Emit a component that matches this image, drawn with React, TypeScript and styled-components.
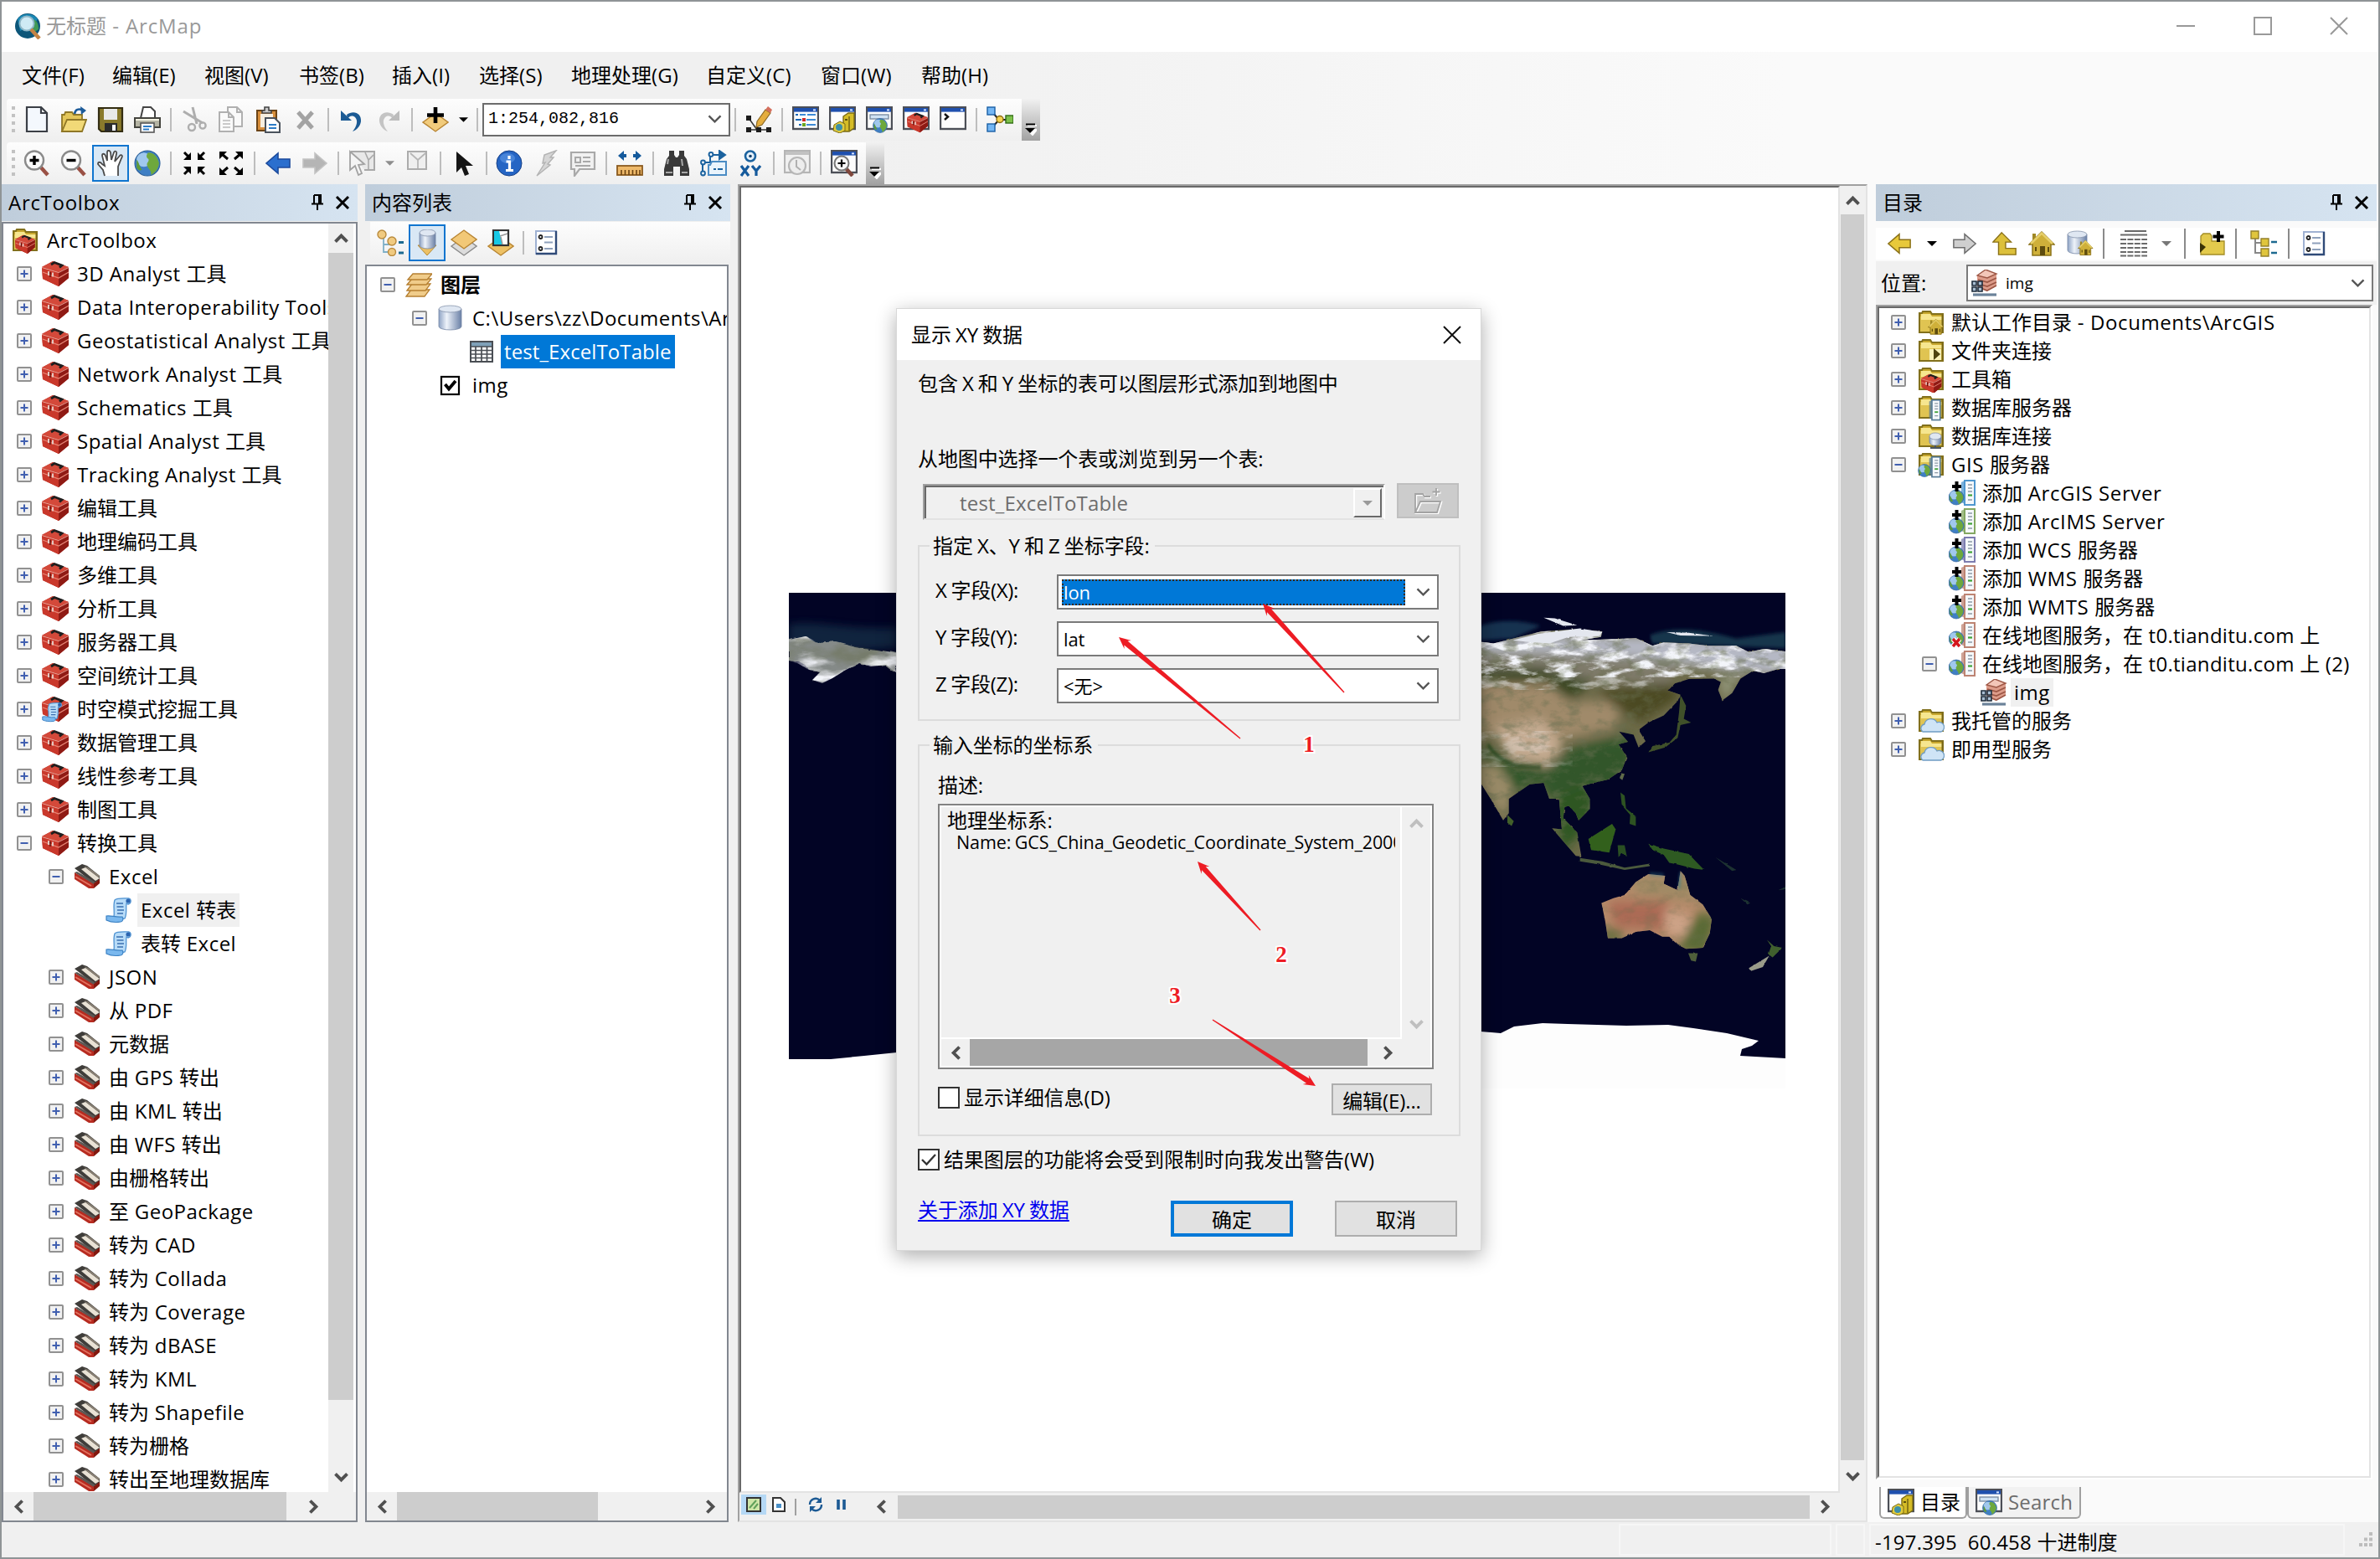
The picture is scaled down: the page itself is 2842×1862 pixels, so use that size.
import React from 'react';
import styled, { createGlobalStyle, css } from 'styled-components';

const UI = '"Open Sans", "Noto Sans CJK SC", sans-serif';

const Global = createGlobalStyle`
  html, body { margin: 0; padding: 0; }
  body { width: 2842px; height: 1862px; overflow: hidden; background: #f0f0f0; }
  *, *::before, *::after { box-sizing: border-box; }
  svg { display: block; flex: none; }
`;

/* ---------- icons ---------- */

const RedBox = () => (
  <g>
    <path d="M0 8 L13 1 L32 8 L32 21 L20 31 L1 22 Z" fill="#b0261c" />
    <path d="M0 8 L13 1 L32 8 L20 14 Z" fill="#d4493a" />
    <path d="M0 8 L20 14 L20 31 L1 22 Z" fill="#c9382b" />
    <path d="M20 14 L32 8 L32 21 L20 31 Z" fill="#8f1a14" />
    <path d="M1 14 L20 21 L32 14" stroke="#e78878" strokeWidth="1.2" fill="none" />
    <path d="M0 8.500 L20 14.500 L32 8.500" stroke="#eaa296" strokeWidth="1" fill="none" />
    <path d="M11 5 L15 2.500 L24 6 L21 8.500" stroke="#1e1e1e" strokeWidth="2.8" fill="none" />
    <path d="M8 13v5 M13 14.500v5" stroke="#e8d5cf" strokeWidth="1.8" />
    <path d="M10 14v6" stroke="#5b120c" strokeWidth="1.4" />
  </g>
);

const Folder = () => (
  <g>
    <path d="M2 5 h3 l1 -2 h9 l2 3 h13 v22 h-28 z" fill="#c9a92f" stroke="#82701c" strokeWidth="2" />
    <path d="M3 9 h26 v18 h-26 z" fill="#e0c452" />
    <path d="M4 6 h11 l2 3 h12 v4 h-25 z" fill="#f6e68f" />
    <path d="M29.500 7 V27" stroke="#7a6818" strokeWidth="2" />
  </g>
);

const Globe = ({ cx = 16, cy = 16, r = 14 }: { cx?: number; cy?: number; r?: number }) => (
  <g transform={`translate(${cx} ${cy}) scale(${r / 14})`}>
    <circle r="14" fill="#3f7fc4" stroke="#285d96" strokeWidth="1" />
    <circle cx="-4" cy="-4" r="8" fill="#b9dbf8" opacity=".8" />
    <path d="M1 -12 C8 -12 12 -6 13 0 C12 7 8 11 4 13 C5 8 1 7 0 3 C-2 -1 3 -2 1 -5 C-2 -7 -1 -10 1 -12Z" fill="#6ea83c" />
    <path d="M-12 -4 C-9 -1 -9 4 -6 7 C-8 9 -10 8 -12 5Z" fill="#5f9b38" />
  </g>
);

const Win = () => (
  <g>
    <rect x="1" y="1" width="30" height="26" fill="#fdfdfd" stroke="#4c4f57" strokeWidth="2.4" />
    <rect x="2" y="2" width="28" height="4.6" fill="#1f50ae" />
    <path d="M25 4.4h3" stroke="#d5e4ff" strokeWidth="2" />
  </g>
);

const CatBox = () => (
  <g>
    <path d="M17 12 l6 -4 h7 v18 l-6 4 h-7 z" fill="#d5bc27" stroke="#7a6a12" strokeWidth="1.4" />
    <path d="M24 12v17" stroke="#8b7a17" strokeWidth="2" />
    <path d="M19 16h3" stroke="#5d510c" strokeWidth="2" />
    <path d="M6 22 l7 -4 6 3 v8 l-6 3 -8 -3z" fill="#e2cc3d" stroke="#7a6a12" />
    <circle cx="12" cy="25" r="4" fill="#3c8fa8" />
  </g>
);

const Cylinder = ({ x = 4, y = 2, w = 24, h = 28 }: { x?: number; y?: number; w?: number; h?: number }) => (
  <g>
    <path d={`M${x} ${y + 4} v${h - 8} a${w / 2} 4 0 0 0 ${w} 0 v-${h - 8}z`} fill="url(#cyl)" stroke="#7587a4" strokeWidth=".8" />
    <ellipse cx={x + w / 2} cy={y + 4} rx={w / 2} ry="4" fill="#dfe7f2" stroke="#8593ab" strokeWidth=".8" />
  </g>
);

const ServerBox = ({ c, x = 19 }: { c: string; x?: number }) => (
  <g>
    <path d={`M${x - 4} 3 l4 -2 v28 l-4 -2z`} fill={c} opacity=".75" />
    <rect x={x} y="1" width="12" height="29" fill="#f5f8fb" stroke={c} strokeWidth="2" />
    <path d={`M${x + 4} 6h5 M${x + 4} 10h5 M${x + 4} 14h5 M${x + 4} 24h5`} stroke="#8c99a6" strokeWidth="1.5" />
    <path d={`M${x + 4} 18.5h5`} stroke="#3ea236" strokeWidth="2.2" />
  </g>
);

const Rhomb = ({ y = 16, fill = '#ecc069', s = '#b88532' }: { y?: number; fill?: string; s?: string }) => (
  <path d={`M1 ${y} L16 ${y - 11} L31 ${y} L16 ${y + 11}Z`} fill={fill} stroke={s} strokeWidth="1.4" />
);

const AddServer = ({ c }: { c: string }) => (
  <g>
    <ServerBox c={c} />
    <Globe cx={9} cy={21} r={9} />
    <path d="M9.500 2v12 M4 8h11" stroke="#000" strokeWidth="4" />
  </g>
);

const House = () => (
  <g>
    <path d="M1 17 L16 2 L31 17 L27 17 V30 H5 V17Z" fill="#cfb03a" stroke="#8a7118" strokeWidth="1.5" />
    <path d="M5 4 h4 v6 l-4 4z" fill="#a08825" />
    <path d="M3 16 L16 3.5 L29 16" stroke="#e6cf6a" strokeWidth="2.5" fill="none" />
    <rect x="14" y="19" width="6" height="11" fill="#5e4c0e" />
    <path d="M24 20v6 M9 20v5" stroke="#5e4c0e" strokeWidth="2" />
  </g>
);

const Props = () => (
  <g>
    <rect x="4" y="2" width="24" height="27" fill="#fff" stroke="#9fb1d2" strokeWidth="2" />
    <path d="M28 2 V29 H4" stroke="#2f4a78" strokeWidth="2.4" fill="none" />
    <circle cx="9.5" cy="9" r="2" fill="none" stroke="#222" strokeWidth="1.8" />
    <circle cx="9.5" cy="23" r="2" fill="none" stroke="#222" strokeWidth="1.8" />
    <path d="M14 9h10 M14 15.5h10 M14 23h10" stroke="#8ea0bb" strokeWidth="2" />
  </g>
);

const Rasters = () => (
  <g>
    <path d="M7 7 L17 0 L30 5 L30 19 L18 26 L7 20Z" fill="#dd9c8a" />
    <path d="M7 7 L17 0 L30 5 L19 10Z" fill="#f3c6b8" stroke="#9c5645" strokeWidth="1.400" />
    <path d="M8 12 L19 15 L30 10 M8 17 L19 20 L30 15 M11 22 L19 25 L30 19" stroke="#9c5645" strokeWidth="1.700" fill="none" />
    <path d="M1 14h5v5h-5z M8 14h5v5h-5z M1 21h5v5h-5z M8 21h5v5h-5z" stroke="#1d2b3a" strokeWidth="1.600" fill="#a9bdd1" />
    <path d="M2 30h28" stroke="#6b8299" strokeWidth="3.200" />
  </g>
);

const Scroll = () => (
  <g>
    <path d="M11 4 C14 1 24 2 28 2 C31 3 31 8 27 9 L25 8 C24 14 26 20 23 26 L8 29 C13 24 8 12 11 4Z" fill="#b8dcf8" stroke="#4f93d2" strokeWidth="1.3" />
    <path d="M1 23 C7 22 12 25 20 24 C22 27 20 30 18 30 C12 31 5 30 1 28Z" fill="#7ab8ee" stroke="#3c82c4" strokeWidth="1.2" />
    <path d="M13 8h8 M13.5 12h8 M14 16h8 M14 20h7" stroke="#3a6fb0" strokeWidth="1.5" />
    <circle cx="27" cy="5" r="2.6" fill="#2b64b0" />
  </g>
);

const Doc = ({ x, y, c = '#999' }: { x: number; y: number; c?: string }) => (
  <path d={`M${x} ${y} h11 l6 6 v17 h-17z M${x + 11} ${y} v6 h6`} fill="#fafafa" stroke={c} strokeWidth="2" />
);

const ArrowRight = ({ c, s }: { c: string; s: string }) => (
  <path d="M2 11 H16 V4 L30 16 L16 28 V21 H2Z" fill={c} stroke={s} strokeWidth="1.6" />
);

const icons: Record<string, React.ReactNode> = {
  logo: (
    <g>
      <circle cx="15" cy="16" r="15" fill="#0d5679" />
      <path d="M3 8 C8 0 22 0 27 8 L22 14 L6 22Z" fill="#1a87b4" />
      <path d="M20 8c6 0 8 6 8 12l-6 4z" fill="#3f9a56" />
      <circle cx="14" cy="13" r="8.5" fill="#cfeaf5" stroke="#8fb7c8" strokeWidth="2" />
      <path d="M19 20 L29 31" stroke="#c58344" strokeWidth="4.5" />
    </g>
  ),
  blank: <path d="M4 1 H21 L28 8 V30 H4Z M21 1 V8 H28" fill="#f4f8fd" stroke="#3b3f46" strokeWidth="2.2" />,
  open: (
    <g>
      <path d="M2 30 V10 h3 l1 -3 h8 l2 3 h10 v6" fill="#e3c65a" stroke="#8f7726" strokeWidth="1.8" />
      <path d="M2 30 L8 16 H31 L26 30Z" fill="#f1d977" stroke="#8f7726" strokeWidth="1.8" />
      <path d="M17 9 C18 3 22 3 26 4" stroke="#1c5b99" strokeWidth="2.6" fill="none" />
      <path d="M24 0 L31 5 L25 10Z" fill="#1c5b99" />
    </g>
  ),
  save: (
    <g>
      <path d="M2 2 H30 V30 H5 L2 27Z" fill="#8a7a2c" stroke="#332d12" strokeWidth="2.2" />
      <rect x="8" y="3" width="16" height="13" fill="#e9e9e9" />
      <rect x="9" y="20" width="15" height="10" fill="#2b2b2b" />
      <rect x="18" y="22" width="4" height="7" fill="#fff" />
    </g>
  ),
  print: (
    <g>
      <path d="M8 14 L11 1 H20 L25 6 V14" fill="#fff" stroke="#444" strokeWidth="2" />
      <path d="M1 14 H31 V25 H1Z" fill="#b5b4a4" stroke="#44443e" strokeWidth="2" />
      <path d="M2 16h28" stroke="#f3f2e2" strokeWidth="2" />
      <rect x="8" y="20" width="16" height="11" fill="#fff" stroke="#555" strokeWidth="1.6" />
      <path d="M11 24h10 M11 27.5h7" stroke="#2d7cc7" strokeWidth="1.8" />
    </g>
  ),
  cut: (
    <g stroke="#aeaeae" fill="none">
      <path d="M14 1 L19 21 M3 6 L26 20" strokeWidth="3" />
      <circle cx="13" cy="25" r="4" strokeWidth="2.4" />
      <circle cx="26" cy="23" r="3.6" strokeWidth="2.4" />
    </g>
  ),
  copy: (
    <g>
      <Doc x={12} y={1} c="#b0b0b0" />
      <Doc x={2} y={7} c="#b0b0b0" />
      <path d="M6 17h9 M6 21h9 M6 25h9" stroke="#bbb" strokeWidth="1.6" />
    </g>
  ),
  paste: (
    <g>
      <rect x="3" y="5" width="23" height="24" fill="#d88f3c" stroke="#6b4417" strokeWidth="2" />
      <rect x="7" y="9" width="15" height="16" fill="#f7efe0" />
      <path d="M9 8 h11 v-3 h-3 v-4 h-5 v4 h-3z" fill="#c9c9c9" stroke="#444" strokeWidth="1.6" />
      <path d="M13 14 h11 l6 6 v11 h-17z" fill="#fff" stroke="#4a525c" strokeWidth="2" />
      <path d="M17 22h9 M17 26h9" stroke="#2d7cc7" strokeWidth="2" />
    </g>
  ),
  del: <path d="M8 7 L25 26 M25 7 L8 26" stroke="#a3a3a3" strokeWidth="5" />,
  undo: (
    <g>
      <path d="M10 10 C18 4 28 8 27 18 C26 24 22 28 17 30 C22 24 24 17 20 13 C16 10 13 12 11 15" fill="#1b5a94" />
      <path d="M3 5 V17 H16Z" fill="#1b5a94" />
    </g>
  ),
  redo: (
    <g>
      <path d="M22 10 C14 4 4 8 5 18 C6 24 10 28 15 30 C10 24 8 17 12 13 C16 10 19 12 21 15" fill="#c4c4c4" />
      <path d="M29 5 V17 H16Z" fill="#bcbcbc" />
    </g>
  ),
  addData: (
    <g>
      <Rhomb y={19} fill="#f1cb7c" />
      <path d="M16 1v19 M6 10.5h20" stroke="#000" strokeWidth="4.6" />
    </g>
  ),
  editor: (
    <g>
      <path d="M4 14 L14 28 M3 28h26" stroke="#333" strokeWidth="1.5" />
      <path d="M1 11h6v6h-6z M1 25h6v6h-6z M13 25h6v6h-6z M25 25h6v6h-6z" fill="#1b1b1b" />
      <path d="M14 18 L24 4 L30 8 L20 22 L13 25Z" fill="#e5ad3e" stroke="#8c6822" strokeWidth="1.2" />
      <path d="M24 4 L27 0 L32 4 L30 8Z" fill="#d5705e" />
    </g>
  ),
  winToc: (
    <g>
      <Win />
      <path d="M4 10h3 M4 16h7 M8 22h3" stroke="#1466b8" strokeWidth="2" />
      <path d="M9 10h7 M17 16h11 M17 22h11 M18 10h10" stroke="#3d8ad6" strokeWidth="2" />
      <path d="M12 14h4v4h-4z" fill="#d02828" />
      <path d="M12 20h4v4h-4z" fill="#6aa520" />
    </g>
  ),
  winCat: <g><Win /><CatBox /></g>,
  winSearch: (
    <g>
      <Win />
      <rect x="5" y="10" width="22" height="5" fill="#cfe2f4" stroke="#7b8ea3" strokeWidth="1.4" />
      <Globe cx={17} cy={23} r={8.5} />
    </g>
  ),
  winTool: <g><Win /><g transform="translate(5 7) scale(.78)"><RedBox /></g></g>,
  winPy: <g><Win /><path d="M6 9 L10 12.500 L6 16" stroke="#111" strokeWidth="2.4" fill="none" /></g>,
  model: (
    <g stroke="#222" strokeWidth="1.4">
      <path d="M6 6 L15 16 M6 26 L15 16 H24" fill="none" strokeWidth="2" />
      <rect x="1" y="1" width="9" height="9" fill="#74b7f5" stroke="#1a5fa5" />
      <rect x="1" y="21" width="9" height="9" fill="#74b7f5" stroke="#1a5fa5" />
      <circle cx="16" cy="15.500" r="4" fill="#f3d04e" stroke="#8a6c10" />
      <rect x="23" y="11" width="9" height="9" fill="#7cc04a" stroke="#2f6a15" />
    </g>
  ),
  zoomIn: (
    <g>
      <path d="M20 20 L29 30" stroke="#9a5145" strokeWidth="4.5" />
      <circle cx="13" cy="12.500" r="11" fill="#fbfbfb" stroke="#8b8b8b" strokeWidth="2.4" />
      <path d="M13 7v11 M7.500 12.500h11" stroke="#000" strokeWidth="3.4" />
    </g>
  ),
  zoomOut: (
    <g>
      <path d="M20 20 L29 30" stroke="#9a5145" strokeWidth="4.5" />
      <circle cx="13" cy="12.500" r="11" fill="#fbfbfb" stroke="#8b8b8b" strokeWidth="2.4" />
      <path d="M7.500 12.500h11" stroke="#000" strokeWidth="3.4" />
    </g>
  ),
  hand: (
    <path d="M9 31 L7 24 L1 17 C1 14 4 14 6 17 L9 19 L6 7 C6 4 9 4 10 7 L12 13 L12 3 C12 0 15 0 16 3 L17 12 L20 3 C21 1 24 1 23 5 L21 14 L27 7 C29 5 31 7 29 10 L25 20 L25 31" fill="#fff" stroke="#4b4b4b" strokeWidth="1.8" />
  ),
  globe: <Globe r={15} />,
  fixedIn: (
    <g fill="#000" stroke="#000" strokeWidth="3">
      <path d="M4 3L9 8M28 3L23 8M4 29L9 24M28 29L23 24" />
      <path d="M12 3v9h-9z M20 3v9h9z M12 29v-9h-9z M20 29v-9h9z" stroke="none" />
    </g>
  ),
  fixedOut: (
    <g fill="#000" stroke="#000" strokeWidth="3">
      <path d="M5 5L12 11M27 5L20 11M5 27L12 21M27 27L20 21" />
      <path d="M2 2h9l-9 9z M30 2h-9l9 9z M2 30h9l-9-9z M30 30h-9l9-9z" stroke="none" />
    </g>
  ),
  back: <g transform="translate(32 0) scale(-1 1)"><ArrowRight c="#2b6fce" s="#1c4a9c" /></g>,
  fwd: <ArrowRight c="#b5b5b5" s="#c3c3c3" />,
  select: (
    <g>
      <path d="M3 2h28v22h-12" fill="#e8e8e8" stroke="#a9a9a9" strokeWidth="2" />
      <path d="M20 3 L24 12 L30 6 M24 12 V23" stroke="#a9a9a9" strokeWidth="1.6" fill="none" />
      <path d="M2 2 V24 L8 19 L12 30 L16 28 L12 18 L19 17Z" fill="#f5f5f5" stroke="#a2a2a2" strokeWidth="1.8" />
    </g>
  ),
  clear: (
    <g>
      <path d="M5 2h22v21h-22z" fill="#efefef" stroke="#acacac" strokeWidth="2" />
      <path d="M8 4 L17 12 L26 4 M17 12 L17 22" stroke="#b5b5b5" strokeWidth="1.7" fill="none" />
    </g>
  ),
  pointer: <path d="M7 2 V27 L13 21 L17 31 L22 29 L18 19 H27Z" fill="#151515" />,
  info: (
    <g>
      <circle cx="16" cy="16" r="15" fill="#2565c4" stroke="#163f86" strokeWidth="1" />
      <ellipse cx="14" cy="10" rx="9" ry="6" fill="#5f9ae8" opacity=".6" />
      <path d="M16 7v4 M12.500 14h4v10 M12 24.500h9" stroke="#fff" strokeWidth="3.2" fill="none" />
    </g>
  ),
  bolt: <path d="M28 1 L14 6 L12 16 L15 15 L5 31 L21 18 L18 17 L25 9 L21 9Z" fill="#d6d6d6" stroke="#b3b3b3" strokeWidth="1.4" />,
  popup: (
    <g>
      <path d="M2 3h28v20h-18l-6 8v-8h-4z" fill="#f1f1f1" stroke="#a9a9a9" strokeWidth="2.2" />
      <path d="M7 9h6v6h-6z M16 9h9 M16 14h9 M7 19h18" stroke="#a9a9a9" strokeWidth="2" fill="none" />
    </g>
  ),
  measure: (
    <g>
      <path d="M2 7 L9 1 V5 H12 V9 H9 V13Z M30 7 L23 1 V5 H20 V9 H23 V13Z" fill="#155a9c" />
      <rect x="1" y="19" width="30" height="11" fill="#eeb96a" stroke="#8a5a1f" strokeWidth="1.8" />
      <path d="M6 24v6 M10.500 24v6 M15 24v6 M19.500 24v6 M24 24v6 M28 24v6" stroke="#6b4312" strokeWidth="1.6" />
    </g>
  ),
  binoc: (
    <g fill="#3a3a3a">
      <path d="M7 1h6v5l2 3h2l2-3v-5h6v6l3 4 3 12v8h-11v-11h-8v11h-11v-8l3-12 3-4z" />
      <path d="M5 17l1-6 M22 11l1 8 M3 27h8 M22 27h7" stroke="#a8a8a8" strokeWidth="2" />
    </g>
  ),
  route: (
    <g fill="none" stroke="#1c639f" strokeWidth="2">
      <path d="M3 26 V15 H12 V6 H24" />
      <path d="M23 1 L30 6 L23 11Z" fill="#1c639f" />
      <circle cx="3.500" cy="28" r="2.400" fill="#fff" />
      <circle cx="3.500" cy="15" r="2.400" fill="#fff" />
      <circle cx="13" cy="5.500" r="2.400" fill="#fff" />
      <path d="M14 14h17v16h-21v-12h2z" fill="#eaf4fc" stroke="#4b8cc4" />
      <path d="M16 23h3 M21 23h6" />
    </g>
  ),
  xy: (
    <g>
      <circle cx="16" cy="7.500" r="6" fill="#e5f1fb" stroke="#1c639f" strokeWidth="2.6" />
      <circle cx="16" cy="7.500" r="1.800" fill="#123f6b" />
      <path d="M5 19 L14 31 M14 19 L5 31 M18 19 L23 25 L28 19 M23 25 V31" stroke="#155a9c" strokeWidth="3.200" fill="none" />
    </g>
  ),
  time: (
    <g>
      <rect x="1" y="1" width="30" height="26" fill="#f1f1f1" stroke="#b5b5b5" strokeWidth="2.2" />
      <rect x="2" y="2" width="28" height="4" fill="#c2c2c2" />
      <circle cx="16" cy="19" r="10" fill="#ededed" stroke="#b7b7b7" strokeWidth="2.2" />
      <path d="M15 12v8l5 4" stroke="#b0b0b0" strokeWidth="2" fill="none" />
    </g>
  ),
  zoomWin: (
    <g>
      <Win />
      <path d="M18 22 L26 31" stroke="#80473c" strokeWidth="4.5" />
      <circle cx="13" cy="16" r="8.500" fill="#f8f8f8" stroke="#777" strokeWidth="2" />
      <path d="M13 11.500v9 M8.500 16h9" stroke="#000" strokeWidth="2.2" />
    </g>
  ),
  toolbox: <RedBox />,
  toolboxScript: <g><RedBox /><g transform="translate(0 7) scale(.78)"><Scroll /></g></g>,
  arcFolder: <g><Folder /><g transform="translate(4 9) scale(.74)"><RedBox /></g></g>,
  toolset: (
    <g>
      <path d="M1 6 L10 1 L16 3 L31 15 L31 20 L24 24Z" fill="#3f3d3a" />
      <path d="M9 7 L14 5 L31 18 L26 21Z" fill="#e9e2d5" />
      <path d="M12 3 L17 5 L31 15 L30 17Z" fill="#8d8477" />
      <path d="M1 11 L24 24 L24 30 L18 30 L1 19Z" fill="#b72b20" />
      <path d="M1 11 L4 10 L25 22 L24 25Z" fill="#5b5753" />
      <path d="M2 16 L21 27" stroke="#e2715f" strokeWidth="1.800" />
      <path d="M24 24 L31 19 V24 L24 30Z" fill="#82180f" />
    </g>
  ),
  script: <Scroll />,
  layers: (
    <g fill="#f0cc8a" stroke="#b57f31" strokeWidth="1.300">
      <path d="M1 30 L7 22 H29 L23 30Z" />
      <path d="M2 23 L8 15 H30 L24 23Z" />
      <path d="M2 16 L8 9 H31 L25 16Z" />
      <path d="M3 10 L9 3 H32 L26 10Z" />
    </g>
  ),
  db: <Cylinder x={2} y={1} w={27} h={29} />,
  table: (
    <g>
      <rect x="2" y="4" width="26" height="24" fill="#fff" stroke="#4a4e54" strokeWidth="2" />
      <rect x="3" y="5" width="24" height="5" fill="#7fa0b8" />
      <path d="M2 10h26 M2 14.500h26 M2 19h26 M2 23.500h26 M8 10v18 M15 10v18 M21.500 10v18" stroke="#4a4e54" strokeWidth="1.700" />
    </g>
  ),
  check: (
    <g>
      <rect x="5" y="6" width="21" height="21" fill="#fff" stroke="#000" strokeWidth="2.200" />
      <path d="M9.500 15 L14 20.500 L22 11" stroke="#000" strokeWidth="3.800" fill="none" />
    </g>
  ),
  treeLayers: (
    <g>
      <path d="M8 10v17h14 M8 18h12" stroke="#7fb0c8" strokeWidth="1.800" fill="none" />
      <circle cx="6" cy="6" r="5" fill="#f0ca80" stroke="#b98a3c" strokeWidth="1.400" />
      <circle cx="18" cy="14" r="5" fill="#f0ca80" stroke="#b98a3c" strokeWidth="1.400" />
      <circle cx="18" cy="27" r="4.500" fill="#f0ca80" stroke="#b98a3c" strokeWidth="1.400" />
      <path d="M26 15.500h6 M26 28h6" stroke="#1d6a90" strokeWidth="2.800" />
    </g>
  ),
  dbLayer: <g><path d="M5 19h22l-11 12z" fill="#edc165" stroke="#b58a35" /><Cylinder x={7} y={0} w={19} h={23} /></g>,
  twoRhomb: <g><Rhomb y={20} fill="#dcdcdc" s="#8b8b8b" /><Rhomb y={12} fill="#f2c877" /></g>,
  selRhomb: (
    <g>
      <Rhomb y={20} fill="#edc165" />
      <rect x="7" y="1" width="18" height="18" fill="#fff" stroke="#333" strokeWidth="2.200" />
      <path d="M8 2h6l4 16h-10z" fill="#17c9e6" />
      <path d="M15 8 L24 5 M16 9 L18 18" stroke="#999" strokeWidth="1.500" />
    </g>
  ),
  props: <Props />,
  cBack: <g transform="translate(32 0) scale(-1 1)"><ArrowRight c="#e8c93a" s="#8a7118" /></g>,
  cFwd: <ArrowRight c="#cfcfcf" s="#6d6d6d" />,
  up: <path d="M12 2 L24 14 H17 V22 H30 V30 H8 V14 H1Z" fill="#dcc03b" stroke="#8a7118" strokeWidth="1.500" />,
  home: <House />,
  dbHome: <g><Cylinder x={1} y={1} w={23} h={27} /><g transform="translate(13 11) scale(.58 .62)"><House /></g></g>,
  grid: (
    <g stroke="#6a6a6a" strokeWidth="2">
      <path d="M5 1h26 M0 5.500h32 " />
      <path d="M0 11h32 M0 16h32 M0 21h32 M0 26h32 M0 30.500h32" strokeDasharray="7 1.400" />
    </g>
  ),
  addFolder: (
    <g>
      <path d="M2 29 V7 l3 -3 h8 l2 3 v6 h15 v16z" fill="#e3ca4d" stroke="#a48d24" strokeWidth="1.300" />
      <path d="M1 15 l7 5 -7 7z" fill="#3b3206" />
      <path d="M23 1v13 M16.500 7.500h13" stroke="#000" strokeWidth="4" />
    </g>
  ),
  cTree: (
    <g>
      <path d="M6 9v18h10 M6 15h10" stroke="#888" strokeWidth="2" fill="none" />
      <path d="M1 1h9v9h-9z M13 10h9v9h-9z M13 22h9v9h-9z" fill="#e0c53c" stroke="#94802a" strokeWidth="1.400" />
      <path d="M25 14h7 M25 27h7" stroke="#1d6a90" strokeWidth="2.600" />
    </g>
  ),
  rasters: <Rasters />,
  fHome: <g><Folder /><g transform="translate(12 11) scale(.6 .64)"><House /></g></g>,
  fLink: <g><Folder /><rect x="14" y="14" width="14" height="13" fill="#f8f1b8" /><path d="M19 13 l8 7 -8 7z" fill="#4d430e" /></g>,
  fTool: <g><Folder /><g transform="translate(4 9) scale(.76)"><RedBox /></g></g>,
  fServer: <g><Folder /><g transform="translate(3 6) scale(.82)"><ServerBox c="#557a96" x={17} /></g></g>,
  fDb: <g><Folder /><Cylinder x={14} y={12} w={14} h={15} /><path d="M21 27v3 M15 30h13" stroke="#4a5560" strokeWidth="2" /></g>,
  fGis: <g><Folder /><g transform="translate(3 6) scale(.82)"><ServerBox c="#557a96" x={17} /></g><Globe cx={8} cy={23} r={7.500} /></g>,
  fCloud: <g><Folder /><path d="M6 29 a5 5 0 0 1 2 -9 a8 8 0 0 1 15 -2 a6 6 0 0 1 5 11z" fill="#cfe4f6" stroke="#6f9cc4" strokeWidth="1.300" /></g>,
  sArc: <AddServer c="#4f97cf" />,
  sIms: <AddServer c="#84a862" />,
  sWcs: <AddServer c="#7d7db0" />,
  sWms: <AddServer c="#bd8473" />,
  wmsOff: (
    <g><ServerBox c="#bd8473" /><Globe cx={9} cy={20} r={9} /><path d="M5 20l8 9 M13 20l-8 9" stroke="#fff" strokeWidth="6" /><path d="M5 20l8 9 M13 20l-8 9" stroke="#d4161c" strokeWidth="3.400" /></g>
  ),
  wmsOn: <g><ServerBox c="#bd8473" /><Globe cx={9} cy={20} r={9} /></g>,
};

const Icon = ({ n, s = 32 }: { n: string; s?: number }) => (
  <svg width={s} height={s} viewBox="0 0 32 32">{icons[n]}</svg>
);

const Expander = ({ open }: { open: boolean }) => (
  <svg width="18" height="18" viewBox="0 0 18 18">
    <rect x="1" y="1" width="16" height="16" rx="1" fill="#f1f1f1" stroke="#919191" strokeWidth="2" />
    <path d="M4.500 9h9" stroke="#405fb0" strokeWidth="2" />
    {!open && <path d="M9 4.500v9" stroke="#405fb0" strokeWidth="2" />}
  </svg>
);

const rot = { up: 0, right: 90, down: 180, left: 270 };
const Chevron = ({ d, c = '#505050', s = 21, w = 3.3 }: { d: keyof typeof rot; c?: string; s?: number; w?: number }) => (
  <svg width={s} height={s} viewBox="0 0 18 18">
    <path d="M3 12.500 L9 6.500 L15 12.500" transform={`rotate(${rot[d]} 9 9)`} stroke={c} strokeWidth={w} fill="none" />
  </svg>
);

/* ---------- mixed Chinese / Latin labels ---------- */

const Latin = styled.span<{ $ls: number }>`
  letter-spacing: ${(p) => p.$ls}px;
`;

const Mixed = ({ t, ls = 0.5 }: { t: string; ls?: number }) => (
  <>
    {t.split(/([\x20-\x7e]+)/).filter(Boolean).map((s, i) =>
      /^[\x20-\x7e]/.test(s) ? <Latin key={i} $ls={ls}>{s}</Latin> : s,
    )}
  </>
);

/* ---------- window frame ---------- */

const Desktop = styled.div`
  width: 2842px;
  height: 1862px;
  display: flex;
  flex-direction: column;
  background: linear-gradient(90deg, #f0f0f0 0%, #f0f0f0 35%, #fafafa 75%, #fafafa 100%);
  border: 2px solid #8f9496;
  font: 24px/40px ${UI};
  color: #000;
  position: relative;
  overflow: hidden;
`;

const TitleBar = styled.header`
  height: 60px;
  flex: none;
  background: #fff;
  display: flex;
  align-items: center;
  padding: 0 0 3px 16px;
  color: #999;
`;

const TitleText = styled.span`
  margin-left: 5px;
  flex: 1;
  white-space: pre;
`;

const WindowButtons = styled.div`
  display: flex;
  width: 276px;
  justify-content: space-between;
  padding: 0 36px 0 35px;
`;

const MenuBar = styled.nav`
  height: 56px;
  flex: none;
  display: flex;
  align-items: center;
  padding-left: 24px;
`;

const MenuItem = styled.span<{ $w: number }>`
  width: ${(p) => p.$w}px;
  white-space: nowrap;
`;

const ToolbarRow = styled.div<{ $mb?: number }>`
  height: 50px;
  flex: none;
  margin: 0 0 ${(p) => p.$mb ?? 0}px 6px;
  display: flex;
  align-items: stretch;
`;

const Toolbar = styled.div`
  display: flex;
  align-items: center;
  padding-right: 4px;
  background: linear-gradient(#fdfdfd, #efefef);
  border-radius: 4px 0 0 4px;
`;

const Grip = styled.div`
  width: 4px;
  height: 32px;
  margin: 0 4px 0 6px;
  background: repeating-linear-gradient(#c2c2c2 0 4px, transparent 4px 9px);
`;

const Cell = styled.div<{ $on?: boolean; $w?: number }>`
  width: ${(p) => p.$w ?? 44}px;
  height: 44px;
  display: flex;
  align-items: center;
  justify-content: center;
  flex: none;
  ${(p) => p.$on && css`
    border: 2px solid #0f75cf;
    background: #d9e8f5;
  `}
`;

const Sep = styled.div<{ $w?: number; $c?: string; $h?: number }>`
  width: 2px;
  height: ${(p) => p.$h ?? 28}px;
  margin: 0 ${(p) => ((p.$w ?? 12) - 2) / 2}px;
  background: ${(p) => p.$c ?? '#bdbdbd'};
  flex: none;
`;

const Overflow = styled.div`
  width: 22px;
  display: flex;
  align-items: flex-end;
  justify-content: center;
  padding-bottom: 6px;
  background: linear-gradient(#f1f1f1, #a2a2a2);
`;

const ScaleBox = styled.div`
  width: 296px;
  height: 40px;
  border: 2px solid #6c6c6c;
  background: #fff;
  display: flex;
  align-items: center;
  justify-content: space-between;
  padding: 0 6px 2px 5px;
  font: 20px/32px "Liberation Mono", monospace;
`;

const Caret = ({ c = '#000', w = 12 }: { c?: string; w?: number }) => (
  <svg width={w} height="8" viewBox="0 0 12 8"><path d="M0 1h12l-6 6z" fill={c} /></svg>
);

const OverflowMark = () => (
  <Overflow>
    <svg width="14" height="15" viewBox="0 0 14 15">
      <path d="M3 3h11M3 8h11l-5 6z" stroke="#fff" strokeWidth="2" fill="#fff" />
      <path d="M1 1.500h11" stroke="#000" strokeWidth="2" />
      <path d="M0 6h12l-6 6z" fill="#000" />
    </svg>
  </Overflow>
);

const Tools = ({ items }: { items: string[] }) => (
  <>
    {items.map((t, i) => {
      if (t.startsWith('|')) return <Sep key={i} $w={Number(t.slice(1)) || 12} />;
      if (t.startsWith('v')) return <Cell key={i} $w={Number(t.slice(1, 3))}><Caret c={t.endsWith('g') ? '#8d8d8d' : '#000'} w={11} /></Cell>;
      if (t.startsWith('*')) return <Cell key={i} $on><Icon n={t.slice(1)} /></Cell>;
      return <Cell key={i}><Icon n={t} /></Cell>;
    })}
  </>
);

const Workspace = styled.main`
  height: 1598px;
  flex: none;
  display: flex;
`;

/* ---------- panels ---------- */

const Panel = styled.section<{ $w: number; $mr?: number }>`
  width: ${(p) => p.$w}px;
  margin-right: ${(p) => p.$mr ?? 0}px;
  display: flex;
  flex-direction: column;
  flex: none;
`;

const PanelHead = styled.div`
  height: 44px;
  flex: none;
  background: linear-gradient(90deg, #bfcddb, #d6e4f1);
  display: flex;
  align-items: center;
  gap: 13px;
  padding: 0 9px 0 8px;
`;

const PanelTitle = styled.span`
  flex: 1;
`;

const HeadButtons = () => (
  <>
    <svg width="16" height="20" viewBox="0 0 16 20">
      <path d="M4 1h8v10 M4 1v10 M1 11.500h14 M8 12v7" stroke="#000" strokeWidth="2" fill="none" />
      <path d="M10.500 1v10" stroke="#000" strokeWidth="3" />
    </svg>
    <svg width="18" height="18" viewBox="0 0 18 18"><path d="M2 2L16 16M16 2L2 16" stroke="#000" strokeWidth="3" /></svg>
  </>
);

const PanelBody = styled.div<{ $mr?: number }>`
  flex: 1;
  min-height: 0;
  margin: 1px ${(p) => p.$mr ?? 0}px 0 0;
  border: 2px solid #828790;
  background: #fff;
  display: flex;
  flex-direction: column;
  overflow: hidden;
`;

const Split = styled.div`
  flex: 1;
  min-height: 0;
  display: flex;
`;

const Tree = styled.div`
  flex: 1;
  min-width: 0;
  overflow: hidden;
`;

const Row = styled.div<{ $h: number; $pad: number }>`
  height: ${(p) => p.$h}px;
  padding-left: ${(p) => p.$pad}px;
  display: flex;
  align-items: center;
`;

const ExpSlot = styled.span<{ $w: number }>`
  width: ${(p) => p.$w}px;
  flex: none;
`;

const Label = styled.span<{ $hl?: string; $bold?: boolean; $ml: number; $h: number }>`
  margin-left: ${(p) => p.$ml}px;
  padding: 0 4px;
  height: ${(p) => p.$h}px;
  line-height: ${(p) => p.$h - 1}px;
  white-space: pre;
  background: ${(p) => p.$hl ?? 'transparent'};
  color: ${(p) => (p.$hl === '#0078d7' ? '#fff' : '#000')};
  font-weight: ${(p) => (p.$bold ? 700 : 400)};
`;

type Node = { pad: number; exp?: '+' | '-'; icon: string; text: string; hl?: string; bold?: boolean; ls?: number };

const TreeView = ({ nodes, h, slot, ml }: { nodes: Node[]; h: number; slot: number; ml: number }) => (
  <>
    {nodes.map((n, i) => (
      <Row key={i} $h={h} $pad={n.pad}>
        {n.exp && <ExpSlot $w={slot}><Expander open={n.exp === '-'} /></ExpSlot>}
        <Icon n={n.icon} />
        <Label $hl={n.hl} $bold={n.bold} $ml={ml} $h={h}><Mixed t={n.text} ls={n.ls ?? 0.5} /></Label>
      </Row>
    ))}
  </>
);

const Bar = styled.div<{ $v?: boolean; $size: number }>`
  display: flex;
  flex: none;
  align-items: stretch;
  flex-direction: ${(p) => (p.$v ? 'column' : 'row')};
  ${(p) => (p.$v ? 'width' : 'height')}: ${(p) => p.$size}px;
  background: #f0f0f0;
`;

const BarEnd = styled.div<{ $len: number }>`
  flex: 0 0 ${(p) => p.$len}px;
  display: flex;
  align-items: center;
  justify-content: center;
`;

const Thumb = styled.div<{ $len: number; $c?: string }>`
  flex: 0 0 ${(p) => p.$len}px;
  background: ${(p) => p.$c ?? '#cdcdcd'};
`;

const Fill = styled.div`
  flex: 1;
`;

const Space = styled.div<{ $w: number }>`
  flex: 0 0 ${(p) => p.$w}px;
`;

const box = (text: string, icon = 'toolbox', exp: '+' | '-' = '+'): Node => ({ pad: 16, exp, icon, text });
const set = (text: string, exp: '+' | '-' = '+'): Node => ({ pad: 54, exp, icon: 'toolset', text });

const toolboxNodes: Node[] = [
  { pad: 10, icon: 'arcFolder', text: 'ArcToolbox' },
  box('3D Analyst 工具'), box('Data Interoperability Tools'), box('Geostatistical Analyst 工具'),
  box('Network Analyst 工具'), box('Schematics 工具'), box('Spatial Analyst 工具'), box('Tracking Analyst 工具'),
  box('编辑工具'), box('地理编码工具'), box('多维工具'), box('分析工具'), box('服务器工具'), box('空间统计工具'),
  box('时空模式挖掘工具', 'toolboxScript'), box('数据管理工具'), box('线性参考工具'), box('制图工具'),
  box('转换工具', 'toolbox', '-'),
  set('Excel', '-'),
  { pad: 122, icon: 'script', text: 'Excel 转表', hl: '#f0f0f0' },
  { pad: 122, icon: 'script', text: '表转 Excel' },
  set('JSON'), set('从 PDF'), set('元数据'), set('由 GPS 转出'), set('由 KML 转出'), set('由 WFS 转出'),
  set('由栅格转出'), set('至 GeoPackage'), set('转为 CAD'), set('转为 Collada'), set('转为 Coverage'),
  set('转为 dBASE'), set('转为 KML'), set('转为 Shapefile'), set('转为栅格'), set('转出至地理数据库'),
];

const tocNodes: Node[] = [
  { pad: 16, exp: '-', icon: 'layers', text: '图层', bold: true },
  { pad: 54, exp: '-', icon: 'db', text: 'C:\\Users\\zz\\Documents\\ArcGIS' },
  { pad: 122, icon: 'table', text: 'test_ExcelToTable', hl: '#0078d7', ls: 0.1 },
  { pad: 84, icon: 'check', text: 'img' },
];

const cat = (text: string, icon: string, exp: '+' | '-' = '+'): Node => ({ pad: 14, exp, icon, text, ls: 0.6 });
const srv = (text: string, icon: string): Node => ({ pad: 83, icon, text, ls: 0.6 });
const catalogNodes: Node[] = [
  cat('默认工作目录 - Documents\\ArcGIS', 'fHome'), cat('文件夹连接', 'fLink'), cat('工具箱', 'fTool'),
  cat('数据库服务器', 'fServer'), cat('数据库连接', 'fDb'), cat('GIS 服务器', 'fGis', '-'),
  srv('添加 ArcGIS Server', 'sArc'),
  srv('添加 ArcIMS Server', 'sIms'),
  srv('添加 WCS 服务器', 'sWcs'),
  srv('添加 WMS 服务器', 'sWms'),
  srv('添加 WMTS 服务器', 'sWms'),
  { ...srv('在线地图服务，在 t0.tianditu.com 上', 'wmsOff'), ls: 0.3 },
  { pad: 51, exp: '-', icon: 'wmsOn', text: '在线地图服务，在 t0.tianditu.com 上 (2)', ls: 0.3 },
  { pad: 121, icon: 'rasters', text: 'img', hl: '#f0f0f0' },
  cat('我托管的服务', 'fCloud'), cat('即用型服务', 'fCloud'),
];

/* ---------- table of contents / catalog toolbars ---------- */

const TocBar = styled.div`
  height: 50px;
  margin: 1px 0 0 6px;
  padding-left: 2px;
  display: flex;
  align-items: center;
  background: linear-gradient(#fdfdfd, #efefef);
  flex: none;
`;

const CatalogBar = styled.div`
  height: 38px;
  margin: 8px 0 2px;
  display: flex;
  align-items: center;
  background: #fff;
  flex: none;
`;

const Location = styled.div`
  height: 52px;
  background: #f0f0f0;
  display: flex;
  align-items: center;
  padding: 0 4px 0 6px;
  flex: none;
  white-space: nowrap;
`;

const LocationLabel = styled.span`
  width: 102px;
`;

const LocationBox = styled.div`
  flex: 1;
  height: 44px;
  border: 2px solid #7a7a7a;
  background: #fff;
  display: flex;
  align-items: center;
  padding: 0 6px 0 4px;
  gap: 9px;
  font-size: 19px;
`;

const Sunken = styled.div<{ $mr?: number }>`
  flex: 1;
  min-height: 0;
  margin-right: ${(p) => p.$mr ?? 0}px;
  background: #fff;
  border: 2px solid;
  border-color: #a0a0a0 #fff #fff #a0a0a0;
  display: flex;
`;

const SunkenInner = styled.div`
  flex: 1;
  min-width: 0;
  border: 2px solid;
  border-color: #696969 #e3e3e3 #e3e3e3 #696969;
  overflow: hidden;
`;

const Tabs = styled.div`
  height: 51px;
  padding: 9px 0 0 4px;
  display: flex;
  align-items: flex-start;
  flex: none;
`;

const Tab = styled.div<{ $on?: boolean; $w: number }>`
  width: ${(p) => p.$w}px;
  height: 38px;
  display: flex;
  align-items: center;
  gap: 7px;
  padding-left: 8px;
  background: ${(p) => (p.$on ? '#fff' : '#f2f2f2')};
  color: ${(p) => (p.$on ? '#000' : '#6d6d6d')};
  border: 2px solid #a0a0a0;
  border-top: 0;
  border-radius: 0 0 6px 6px;
`;

/* ---------- map ---------- */

const MapPanel = styled.section`
  width: 1349px;
  margin-right: 10px;
  display: flex;
  flex-direction: column;
  flex: none;
  border: 2px solid;
  border-color: #a0a0a0 #e3e3e3 #e3e3e3 #a0a0a0;
  background: #f0f0f0;
`;

const MapTop = styled.div`
  height: 1561px;
  display: flex;
  flex: none;
`;

const MapView = styled.div`
  flex: 1;
  border: 2px solid;
  border-color: #696969 #e3e3e3 #e3e3e3 #696969;
  background: #fff;
  margin-right: 1px;
  padding: 484px 0 0 57px;
`;

const MapFoot = styled.div`
  flex: 1;
  display: flex;
  align-items: center;
  padding-left: 2px;
`;

const ViewBtn = styled.div<{ $on?: boolean; $w: number }>`
  width: ${(p) => p.$w}px;
  height: 24px;
  display: flex;
  align-items: center;
  justify-content: center;
  margin-bottom: 6px;
  background: ${(p) => (p.$on ? '#b5d8f5' : 'transparent')};
`;

const asia = 'M84 200 L130 205 L200 190 L300 168 L430 160 L520 168 L515 185 L440 195 L600 190 L640 188 L700 212 L740 202 L830 205 L900 212 L1000 212 L1045 232 L1100 222 L1176 230 V285 L1150 285 L1100 298 L1060 290 L1015 315 L985 360 L950 383 L935 350 L945 325 L920 315 L830 316 L780 330 L755 352 L800 365 L790 385 L740 430 L685 452 L650 475 L675 510 L650 530 L632 490 L580 480 L612 512 L578 520 L608 560 L590 600 L540 630 L480 642 L448 650 L475 690 L475 722 L435 757 L425 735 L400 712 L385 715 L380 750 L430 795 L445 870 L425 868 L340 782 L375 785 L365 690 L330 690 L310 640 L260 645 L185 690 L185 735 L165 757 L120 690 L84 640Z';
const australia = 'M517 1015 L560 1000 L600 990 L640 950 L685 925 L745 930 L740 955 L790 975 L800 915 L815 930 L835 990 L880 1020 L912 1065 L905 1110 L880 1155 L820 1158 L790 1145 L760 1120 L735 1120 L690 1100 L640 1105 L590 1125 L540 1125 L530 1070Z';
const alaska = 'M0 56 L20 52 L36 60 L56 58 L80 64 L104 68 L129 72 V96 L116 86 L98 88 L84 84 L68 92 L52 102 L40 108 L28 104 L38 94 L24 92 L10 84 L0 82Z';

const WorldMap = () => (
  <svg width="1190" height="592" viewBox="0 0 1190 592">
    <defs>
      <clipPath id="land"><path d={asia} /></clipPath>
      <clipPath id="aus"><path d={australia} /></clipPath>
      <clipPath id="alaska"><path d={alaska} /></clipPath>
      <clipPath id="frame"><rect width="1190" height="592" /></clipPath>
      <filter id="soft" x="-30%" y="-30%" width="160%" height="160%"><feGaussianBlur stdDeviation="16" /></filter>
      <filter id="mild" x="-30%" y="-30%" width="160%" height="160%"><feGaussianBlur stdDeviation="5" /></filter>
      <filter id="edge" x="-5%" y="-5%" width="110%" height="110%">
        <feTurbulence type="fractalNoise" baseFrequency="0.05" numOctaves="3" seed="4" result="n" />
        <feDisplacementMap in="SourceGraphic" in2="n" scale="6" xChannelSelector="R" yChannelSelector="G" />
        <feGaussianBlur stdDeviation=".7" />
      </filter>
      <filter id="grain" x="0" y="0" width="100%" height="100%">
        <feTurbulence type="fractalNoise" baseFrequency="0.018 0.036" numOctaves="5" seed="9" />
        <feColorMatrix values="0 0 0 0 .14  0 0 0 0 .16  0 0 0 0 .08  3.2 0 0 0 -1.5" />
      </filter>
      <filter id="snow" x="0" y="0" width="100%" height="100%">
        <feTurbulence type="fractalNoise" baseFrequency="0.012 0.035" numOctaves="5" seed="22" />
        <feColorMatrix values="0 0 0 0 .9  0 0 0 0 .91  0 0 0 0 .96  0 4.5 0 0 -2.05" />
      </filter>
    </defs>
    <g clipPath="url(#frame)">
      <rect width="1190" height="592" fill="#020425" />
      <path d="M0 38 C30 32 60 44 129 42 V66 L60 70 L0 62Z" fill="#16304a" filter="url(#mild)" opacity=".7" />
      <g filter="url(#edge)"><path d={alaska} fill="#858a88" /></g>
      <g clipPath="url(#alaska)">
        <rect width="130" height="110" filter="url(#snow)" transform="scale(1 1)" />
        <rect width="130" height="110" filter="url(#grain)" opacity=".5" />
      </g>
      <g transform="translate(798 -18) scale(.33333 .38271)">
        <path d="M84 150 Q180 120 300 150 L200 190 L84 195Z" fill="#14304f" filter="url(#mild)" />
        <path d="M690 180 Q800 140 1000 190 L1176 170 V220 L700 205Z" fill="#15364c" filter="url(#mild)" />
        <g filter="url(#edge)">
          <path d={asia} fill="#6d6a48" />
        </g>
        <g clipPath="url(#land)">
          <g filter="url(#soft)">
            <path d="M84 180 H700 L1190 200 V310 L780 270 L600 250 L300 240 L84 240Z" fill="#b5b8c4" />
            <path d="M84 250 L300 250 L600 260 L780 280 L760 330 L400 320 L84 290Z" fill="#807c6c" />
            <path d="M84 285 L300 280 L480 320 L430 375 L250 345 L84 330Z" fill="#3a4624" />
            <path d="M84 330 H330 L400 390 L600 380 L560 470 L350 510 L84 480Z" fill="#a08a6a" />
            <path d="M500 350 L760 330 L800 370 L660 450 L560 400Z" fill="#4b4a24" />
            <path d="M130 470 L300 440 L380 520 L330 585 L200 570Z" fill="#c4aa90" />
            <path d="M84 530 L140 560 L320 600 L420 530 L620 490 L620 620 L480 760 L380 760 L300 640 L180 680 L84 620Z" fill="#33562a" />
            <path d="M84 575 L150 590 L200 650 L170 750 L84 650Z" fill="#9a8b68" />
            <path d="M340 690 L480 640 V760 L380 860Z" fill="#2d5620" />
            <path d="M930 310 L1020 300 L960 390Z" fill="#8f9377" />
          </g>
          <rect x="84" y="150" width="1092" height="160" filter="url(#snow)" />
          <rect x="84" y="300" width="620" height="50" filter="url(#snow)" opacity=".5" />
          <rect x="84" y="480" width="330" height="110" filter="url(#snow)" opacity=".25" />
          <rect x="84" y="150" width="1092" height="740" filter="url(#grain)" opacity=".5" />
        </g>
        <path d="M110 520 Q140 565 210 588 L300 592" stroke="#28471d" strokeWidth="10" fill="none" filter="url(#mild)" />
        <g filter="url(#edge)">
          <path d="M200 195 L290 175 L440 158 L520 170 L510 182 L400 185 L330 205 L250 200Z M310 125 L350 127 L430 148 L380 150Z M750 170 L830 172 L920 182 L800 180Z" fill="#e4e7ef" />
          <path d="M470 815 L555 768 L568 785 L545 858 L480 850Z" fill="#33601f" />
          <path d="M585 670 L600 680 L605 720 L640 745 L640 775 L618 768 L620 740 L590 710Z" fill="#2d5222" />
          <path d="M575 835 L600 835 L608 870 L590 860 L578 872Z" fill="#2b5023" />
          <path d="M685 830 L740 845 L830 862 L860 890 L885 912 L850 908 L790 895 L760 890 L740 865 L700 850Z" fill="#2f5a22" />
          <path d="M440 875 L520 885 L600 905 L690 892 L690 900 L600 912 L510 895 L440 885Z" fill="#4c5a3c" />
          <path d="M800 365 L820 400 L812 440 L838 452 L800 460 L790 500 L745 530 L685 545 L700 525 L760 515 L785 490 L795 420Z" fill="#41512b" />
          <path d="M588 610 L600 612 L592 632 L582 625Z" fill="#5f6a4a" />
          <path d="M180 740 L203 760 L195 775 L180 765Z" fill="#43602c" />
          <path d="M1110 1130 L1135 1150 L1165 1155 L1130 1185 L1115 1175 L1125 1150Z" fill="#41602f" />
          <path d="M1118 1180 L1095 1215 L1050 1228 L1045 1218Z" fill="#9a9c8a" />
          <path d="M828 1172 L862 1172 L855 1198 L838 1195Z" fill="#4f5e3a" />
          <path d="M925 872 L1000 912 L985 915Z M1015 1000 L1050 1015 L1040 1020Z M1150 975 L1176 965 V972Z" fill="#1f3330" />
        </g>
        <g filter="url(#edge)"><path d={australia} fill="#b58a6a" /></g>
        <g clipPath="url(#aus)">
          <g filter="url(#soft)">
            <path d="M540 1010 L760 1010 L740 1100 L570 1090Z" fill="#ab6b54" />
            <path d="M740 1040 L830 1050 L840 1130 L750 1110Z" fill="#cda387" />
            <path d="M620 930 H860 L880 1010 L640 990Z" fill="#a08a65" />
            <path d="M870 1040 L930 1060 L890 1180 L780 1165Z" fill="#5a6a35" />
            <path d="M520 1090 L600 1110 L580 1140 H520Z" fill="#5e6a3b" />
          </g>
          <rect x="510" y="900" width="420" height="270" filter="url(#grain)" opacity=".25" />
        </g>
        <path d="M690 925 L740 928 M795 970 L800 920" stroke="#2d7f96" strokeWidth="6" opacity=".7" filter="url(#mild)" />
      </g>
      <path d="M0 557 L50 557 L90 553 L129 549 V592 H0Z" fill="#fff" />
      <path d="M826 524 L850 526 L866 518 L900 514 L930 515 L1000 517 L1050 516 L1080 520 L1120 526 L1158 535 L1150 541 L1138 545 L1136 553 L1190 556 V592 H826Z" fill="#fdfdfd" />
    </g>
  </svg>
);

/* ---------- status bar ---------- */

const Status = styled.footer`
  height: 42px;
  flex: none;
  background: #f0f0f0;
  display: flex;
  align-items: center;
  padding-right: 5px;
`;

const StatusField = styled.div<{ $w: number }>`
  width: ${(p) => p.$w}px;
  height: 38px;
  line-height: 40px;
  border: 2px solid #f6f6f6;
  margin-right: 5px;
  padding-left: 5px;
  white-space: pre;
`;

/* ---------- dialog ---------- */

const Dialog = styled.div`
  position: absolute;
  left: 1068px;
  top: 366px;
  width: 699px;
  height: 1126px;
  background: #f0f0f0;
  border: 1px solid #d8d8d8;
  box-shadow: 0 6px 22px rgba(0, 0, 0, 0.32);
  display: flex;
  flex-direction: column;
  line-height: 32px;
  white-space: nowrap;
  word-spacing: -1px;
  letter-spacing: -0.1px;
`;

const DialogTitle = styled.div`
  height: 61px;
  background: #fff;
  display: flex;
  align-items: center;
  justify-content: space-between;
  padding: 0 23px 0 17px;
`;

const DialogBody = styled.div`
  flex: 1;
  padding: 12px 24px 0 25px;
  display: flex;
  flex-direction: column;
`;

const Line = styled.div<{ $mt?: number }>`
  height: 32px;
  margin-top: ${(p) => p.$mt ?? 0}px;
  display: flex;
  align-items: center;
  flex: none;
`;

const TableRow = styled.div`
  display: flex;
  margin: 13px 2px 0 6px;
  height: 43px;
  justify-content: space-between;
`;

const DisabledCombo = styled.div`
  width: 552px;
  height: 43px;
  margin-top: 1px;
  border: 2px solid;
  border-color: #a0a0a0 #fff #e3e3e3 #a0a0a0;
  box-shadow: inset 2px 2px 0 #696969;
  display: flex;
  align-items: center;
  justify-content: space-between;
  padding: 2px 2px 0 42px;
  color: #6d6d6d;
  letter-spacing: 0.2px;
`;

const DropBtn = styled.div`
  width: 34px;
  height: 35px;
  border: 2px solid;
  border-color: #fff #696969 #696969 #fff;
  display: flex;
  align-items: center;
  justify-content: center;
`;

const BrowseBtn = styled.div`
  width: 74px;
  height: 42px;
  background: #cccccc;
  border: 2px solid #bfbfbf;
  display: flex;
  align-items: center;
  justify-content: center;
`;

const Group = styled.fieldset<{ $h: number; $mt: number }>`
  margin: ${(p) => p.$mt}px 0 0;
  padding: 0;
  height: ${(p) => p.$h}px;
  border: 2px solid #dcdcdc;
  min-width: 0;
  flex: none;
`;

const Legend = styled.legend`
  margin-left: 12px;
  padding: 0 6px 0 4px;
  height: 32px;
`;

const FieldList = styled.div`
  padding-top: 11px;
`;

const FieldRow = styled.div`
  height: 56px;
  display: flex;
  align-items: center;
  padding: 0 24px 0 19px;
`;

const FieldLabel = styled.span`
  flex: 1;
  margin-top: -5px;
  letter-spacing: -0.3px;
`;

const Combo = styled.div`
  width: 456px;
  height: 42px;
  background: #fff;
  border: 2px solid #7a7a7a;
  display: flex;
  align-items: center;
  justify-content: space-between;
  padding: 0 6px 0 4px;
  font-size: 22px;
`;

const ComboText = styled.span<{ $sel?: boolean }>`
  width: 410px;
  height: 31px;
  line-height: 31px;
  padding-left: 2px;
  ${(p) => p.$sel && css`
    background: #0078d7;
    color: #fff;
    outline: 2px dotted #3a2a10;
    outline-offset: -2px;
  `}
`;

const Desc = styled.div`
  width: 592px;
  height: 317px;
  margin: 6px 0 0 22px;
  border: 2px solid #828282;
  display: flex;
  flex-direction: column;
  box-shadow: inset 0 0 0 2px #fff;
  padding: 2px;
`;

const DescText = styled.div`
  flex: 1;
  min-width: 0;
  padding: 3px 0 0 7px;
  line-height: 26px;
  overflow: hidden;
  white-space: pre;
  border: solid #fff;
  border-width: 0 2px 2px 0;
`;

const DescLine = styled.div`
  font-size: 21.5px;
  letter-spacing: -0.1px;
  padding-left: 11px;
  width: 535px;
  overflow: hidden;
`;

const BottomRow = styled.div`
  display: flex;
  align-items: flex-start;
  justify-content: space-between;
  padding: 17px 32px 0 22px;
`;

const CheckBox = styled.div`
  width: 26px;
  height: 26px;
  border: 2px solid #333;
  background: #fff;
  margin-right: 5px;
  display: flex;
  align-items: center;
  justify-content: center;
`;

const Button = styled.div<{ $w: number; $h: number; $main?: boolean }>`
  width: ${(p) => p.$w}px;
  height: ${(p) => p.$h}px;
  background: #e1e1e1;
  border: ${(p) => (p.$main ? '4px solid #0078d7' : '2px solid #adadad')};
  display: flex;
  align-items: center;
  justify-content: center;
  padding-top: 3px;
`;

const Actions = styled.div`
  display: flex;
  margin-top: 33px;
  padding-right: 4px;
`;

const Link = styled.a`
  color: #0000ee;
  text-decoration: underline;
  text-underline-offset: 3px;
  flex: 1;
  margin-top: -5px;
`;

const Indent = styled.span`
  padding-left: 22px;
`;

const fieldData = [
  { label: 'X 字段(X):', value: 'lon', sel: true },
  { label: 'Y 字段(Y):', value: 'lat', sel: false },
  { label: 'Z 字段(Z):', value: '<无>', sel: false },
];

const Fields = () => (
  <FieldList>
    {fieldData.map((f) => (
      <FieldRow key={f.label}>
        <FieldLabel>{f.label}</FieldLabel>
        <Combo>
          <ComboText $sel={f.sel}>{f.value}</ComboText>
          <Chevron d="down" c="#555" w={2} />
        </Combo>
      </FieldRow>
    ))}
  </FieldList>
);

const DialogBox = () => (
  <Dialog>
    <DialogTitle>
      <span>显示 XY 数据</span>
      <svg width="22" height="22" viewBox="0 0 22 22"><path d="M1 1L21 21M21 1L1 21" stroke="#111" strokeWidth="2" /></svg>
    </DialogTitle>
    <DialogBody>
      <Line>包含 X 和 Y 坐标的表可以图层形式添加到地图中</Line>
      <Line $mt={58}>从地图中选择一个表或浏览到另一个表:</Line>
      <TableRow>
        <DisabledCombo>
          test_ExcelToTable
          <DropBtn><Caret c="#9a9a9a" w={16} /></DropBtn>
        </DisabledCombo>
        <BrowseBtn>
          <svg width="36" height="32" viewBox="0 0 36 32">
            <path d="M3 30 V8 h9 l2 3 h7 M3 30 L9 17 H33 L29 30Z M28 1v9 M23.500 5.500h9" stroke="#fff" strokeWidth="2.400" fill="none" transform="translate(1 1)" />
            <path d="M3 30 V8 h9 l2 3 h7 M3 30 L9 17 H33 L29 30Z M28 1v9 M23.500 5.500h9" stroke="#a3a3a3" strokeWidth="1.800" fill="none" />
          </svg>
        </BrowseBtn>
      </TableRow>
      <Group $h={225} $mt={16}>
        <Legend>指定 X、Y 和 Z 坐标字段:</Legend>
        <Fields />
      </Group>
      <Group $h={483} $mt={13}>
        <Legend>输入坐标的坐标系</Legend>
        <Line $mt={16}><Indent>描述:</Indent></Line>
        <Desc>
          <Split>
            <DescText>
              地理坐标系:
              <DescLine>Name: GCS_China_Geodetic_Coordinate_System_2000</DescLine>
            </DescText>
            <Bar $v $size={34}>
              <BarEnd $len={38}><Chevron d="up" c="#bfbfbf" /></BarEnd>
              <Fill />
              <BarEnd $len={36}><Chevron d="down" c="#bfbfbf" /></BarEnd>
            </Bar>
          </Split>
          <Bar $size={32}>
            <BarEnd $len={34}><Chevron d="left" /></BarEnd>
            <Thumb $len={475} $c="#a6a6a6" />
            <Fill />
            <BarEnd $len={34}><Chevron d="right" /></BarEnd>
            <Space $w={34} />
          </Bar>
        </Desc>
        <BottomRow>
          <Line $mt={1}><CheckBox />显示详细信息(D)</Line>
          <Button $w={120} $h={38}>编辑(E)...</Button>
        </BottomRow>
      </Group>
      <Line $mt={12}>
        <CheckBox><svg width="20" height="20" viewBox="0 0 20 20"><path d="M2 10L7.500 15.500L18 4" stroke="#333" strokeWidth="2.400" fill="none" /></svg></CheckBox>
        结果图层的功能将会受到限制时向我发出警告(W)
      </Line>
      <Actions>
        <Link>关于添加 XY 数据</Link>
        <Button $w={146} $h={43} $main>确定</Button>
        <Space $w={50} />
        <Button $w={146} $h={43}>取消</Button>
      </Actions>
    </DialogBody>
  </Dialog>
);

/* ---------- annotations ---------- */

const Notes = styled.svg`
  position: absolute;
  left: -2px;
  top: -2px;
  width: 2842px;
  height: 1862px;
  pointer-events: none;
`;

const NoteNumber = styled.text`
  font: 700 27px "Liberation Serif", serif;
  fill: #ed1c24;
  stroke: #fff;
  stroke-width: 4px;
  paint-order: stroke;
  text-anchor: middle;
`;

const Pointer = ({ x1, y1, x2, y2 }: { x1: number; y1: number; x2: number; y2: number }) => {
  const len = Math.hypot(x2 - x1, y2 - y1);
  const a = (Math.atan2(y2 - y1, x2 - x1) * 180) / Math.PI;
  return (
    <path
      transform={`translate(${x1} ${y1}) rotate(${a})`}
      d={`M0 -.7 L${len - 11} -3.2 L${len - 14} -6.5 L${len} 0 L${len - 14} 6.5 L${len - 11} 3.2 L0 .7Z`}
      fill="#ed1c24"
    />
  );
};

const menus: [string, number][] = [
  ['文件(F)', 108], ['编辑(E)', 110], ['视图(V)', 113], ['书签(B)', 111], ['插入(I)', 104], ['选择(S)', 110],
  ['地理处理(G)', 161], ['自定义(C)', 137], ['窗口(W)', 120], ['帮助(H)', 100],
];

const CatCell = styled.div<{ $w: number }>`
  width: ${(p) => p.$w}px;
  display: flex;
  justify-content: center;
  flex: none;
`;

const Grow = styled.span`
  flex: 1;
`;

const DotGrip = styled.svg`
  margin-left: 12px;
`;

export default function App() {
  return (
    <Desktop>
      <Global />
      <svg width="0" height="0">
        <defs>
          <linearGradient id="cyl"><stop offset="0" stopColor="#8ea3c4" /><stop offset=".35" stopColor="#eef3fa" /><stop offset="1" stopColor="#6a80a6" /></linearGradient>
        </defs>
      </svg>
      <TitleBar>
        <Icon n="logo" />
        <TitleText><Mixed t="无标题 - ArcMap" ls={0.9} /></TitleText>
        <WindowButtons>
          <svg width="22" height="22" viewBox="0 0 22 22"><path d="M0 11h22" stroke="#999" strokeWidth="2" /></svg>
          <svg width="22" height="22" viewBox="0 0 22 22"><path d="M1 1h20v20h-20z" stroke="#999" strokeWidth="2" fill="none" /></svg>
          <svg width="22" height="22" viewBox="0 0 22 22"><path d="M1 1l20 20M21 1l-20 20" stroke="#999" strokeWidth="2" /></svg>
        </WindowButtons>
      </TitleBar>
      <MenuBar>{menus.map(([t, w]) => <MenuItem key={t} $w={w}><Mixed t={t} ls={0.1} /></MenuItem>)}</MenuBar>
      <ToolbarRow $mb={2}>
        <Toolbar>
          <Grip />
          <Tools items={['blank', 'open', 'save', 'print', '|', 'cut', 'copy', 'paste', 'del', '|', 'undo', 'redo', '|', 'addData', 'v22', '|']} />
          <ScaleBox>1:254,082,816<Chevron d="down" c="#555" w={2} /></ScaleBox>
          <Tools items={['|', 'editor', '|', 'winToc', 'winCat', 'winSearch', 'winTool', 'winPy', '|', 'model']} />
        </Toolbar>
        <OverflowMark />
      </ToolbarRow>
      <ToolbarRow>
        <Toolbar>
          <Grip />
          <Tools items={['zoomIn', 'zoomOut', '*hand', 'globe', '|', 'fixedIn', 'fixedOut', '|', 'back', 'fwd', '|', 'select', 'v22g', 'clear', '|', 'pointer', '|10', 'info', 'bolt', 'popup', '|', 'measure', '|', 'binoc', 'route', 'xy', '|', 'time', '|', 'zoomWin']} />
        </Toolbar>
        <OverflowMark />
      </ToolbarRow>
      <Workspace>
        <Panel $w={425} $mr={9}>
          <PanelHead><PanelTitle><Mixed t="ArcToolbox" ls={0.7} /></PanelTitle><HeadButtons /></PanelHead>
          <PanelBody>
            <Split>
              <Tree><TreeView nodes={toolboxNodes} h={40} slot={30} ml={6} /></Tree>
              <Bar $v $size={30}>
                <BarEnd $len={35}><Chevron d="up" /></BarEnd>
                <Thumb $len={1370} />
                <Fill />
                <BarEnd $len={36}><Chevron d="down" /></BarEnd>
              </Bar>
              <Space $w={3} />
            </Split>
            <Bar $size={34}>
              <BarEnd $len={36}><Chevron d="left" /></BarEnd>
              <Thumb $len={302} />
              <Fill />
              <BarEnd $len={32}><Chevron d="right" /></BarEnd>
              <Space $w={35} />
            </Bar>
          </PanelBody>
        </Panel>
        <Panel $w={436} $mr={9}>
          <PanelHead><PanelTitle>内容列表</PanelTitle><HeadButtons /></PanelHead>
          <TocBar>
            <Tools items={['treeLayers', '*dbLayer', 'twoRhomb', 'selRhomb', '|10', 'props']} />
          </TocBar>
          <PanelBody $mr={2}>
            <Space $w={2} />
            <Split><Tree><TreeView nodes={tocNodes} h={40} slot={30} ml={6} /></Tree></Split>
            <Bar $size={34}>
              <BarEnd $len={36}><Chevron d="left" /></BarEnd>
              <Thumb $len={240} />
              <Fill />
              <BarEnd $len={40}><Chevron d="right" /></BarEnd>
            </Bar>
          </PanelBody>
        </Panel>
        <MapPanel>
          <MapTop>
            <MapView><WorldMap /></MapView>
            <Bar $v $size={28}>
              <BarEnd $len={34}><Chevron d="up" /></BarEnd>
              <Thumb $len={1488} />
              <BarEnd $len={39}><Chevron d="down" /></BarEnd>
            </Bar>
            <Space $w={2} />
          </MapTop>
          <MapFoot>
            <ViewBtn $w={30} $on><svg width="18" height="18" viewBox="0 0 18 18"><rect x="1" y="1" width="16" height="16" fill="#cfe5a8" stroke="#333" strokeWidth="2" /><path d="M4 13L12 4M9 14l5-6" stroke="#5fa05a" strokeWidth="2" /></svg></ViewBtn>
            <ViewBtn $w={30}><svg width="16" height="18" viewBox="0 0 16 18"><path d="M1 1h9l5 5v11h-14z" fill="#fff" stroke="#333" strokeWidth="2" /><path d="M5 8h6v5h-6z" fill="#4a90c8" /></svg></ViewBtn>
            <Sep $w={10} $h={20} $c="#a0a0a0" />
            <ViewBtn $w={38}><svg width="18" height="18" viewBox="0 0 18 18"><path d="M2 9a7 7 0 0 1 12-5M16 9a7 7 0 0 1-12 5" stroke="#1c5a94" strokeWidth="2.400" fill="none" /><path d="M16 0v7h-7z M2 18v-7h7z" fill="#1c5a94" /></svg></ViewBtn>
            <ViewBtn $w={24}><svg width="14" height="14" viewBox="0 0 14 14"><path d="M3 1v12M10 1v12" stroke="#1c5a94" strokeWidth="3.600" /></svg></ViewBtn>
            <Space $w={15} />
            <Bar $size={28}>
              <BarEnd $len={40}><Chevron d="left" /></BarEnd>
              <Thumb $len={1089} />
              <BarEnd $len={36}><Chevron d="right" /></BarEnd>
            </Bar>
          </MapFoot>
        </MapPanel>
        <Panel $w={598}>
          <PanelHead><PanelTitle>目录</PanelTitle><HeadButtons /></PanelHead>
          <CatalogBar>
            <CatCell $w={56}><Icon n="cBack" s={30} /></CatCell>
            <CatCell $w={22}><Caret w={14} /></CatCell>
            <CatCell $w={56}><Icon n="cFwd" s={30} /></CatCell>
            <CatCell $w={40}><Icon n="up" s={30} /></CatCell>
            <CatCell $w={48}><Icon n="home" /></CatCell>
            <CatCell $w={44}><Icon n="dbHome" /></CatCell>
            <Sep $w={12} $h={36} $c="#8a8a8a" />
            <CatCell $w={60}><Icon n="grid" /></CatCell>
            <CatCell $w={18}><Caret c="#777" w={14} /></CatCell>
            <Sep $w={26} $h={36} $c="#8a8a8a" />
            <CatCell $w={40}><Icon n="addFolder" /></CatCell>
            <Sep $w={16} $h={36} $c="#8a8a8a" />
            <CatCell $w={50}><Icon n="cTree" /></CatCell>
            <Sep $w={10} $h={36} $c="#8a8a8a" />
            <CatCell $w={50}><Icon n="props" /></CatCell>
          </CatalogBar>
          <Location>
            <LocationLabel>位置:</LocationLabel>
            <LocationBox><Icon n="rasters" /><Grow>img</Grow><Chevron d="down" c="#555" w={2} /></LocationBox>
          </Location>
          <Sunken $mr={5}>
            <SunkenInner><TreeView nodes={catalogNodes} h={34} slot={32} ml={4} /></SunkenInner>
          </Sunken>
          <Tabs>
            <Tab $w={105} $on><Icon n="winCat" />目录</Tab>
            <Tab $w={136}><Icon n="winSearch" /><Mixed t="Search" ls={0.2} /></Tab>
          </Tabs>
        </Panel>
      </Workspace>
      <Status>
        <Grow />
        <StatusField $w={254} />
        <StatusField $w={35} />
        <StatusField $w={568}><Mixed t="-197.395  60.458 十进制度" ls={0.2} /></StatusField>
        <DotGrip width="18" height="18" viewBox="0 0 18 18">
          <path d="M12 0h4v4h-4z M6 6.500h4v4h-4z M12 6.500h4v4h-4z M0 13h4v4h-4z M6 13h4v4h-4z M12 13h4v4h-4z" fill="#bdbdbd" />
        </DotGrip>
      </Status>
      <DialogBox />
      <Notes viewBox="0 0 2842 1862">
        <Pointer x1={1605} y1={827} x2={1508} y2={721} />
        <Pointer x1={1481} y1={882} x2={1336} y2={761} />
        <Pointer x1={1505} y1={1111} x2={1430} y2={1029} />
        <Pointer x1={1448} y1={1218} x2={1571} y2={1297} />
        <NoteNumber x={1563} y={898}>1</NoteNumber>
        <NoteNumber x={1530} y={1149}>2</NoteNumber>
        <NoteNumber x={1403} y={1198}>3</NoteNumber>
      </Notes>
    </Desktop>
  );
}
